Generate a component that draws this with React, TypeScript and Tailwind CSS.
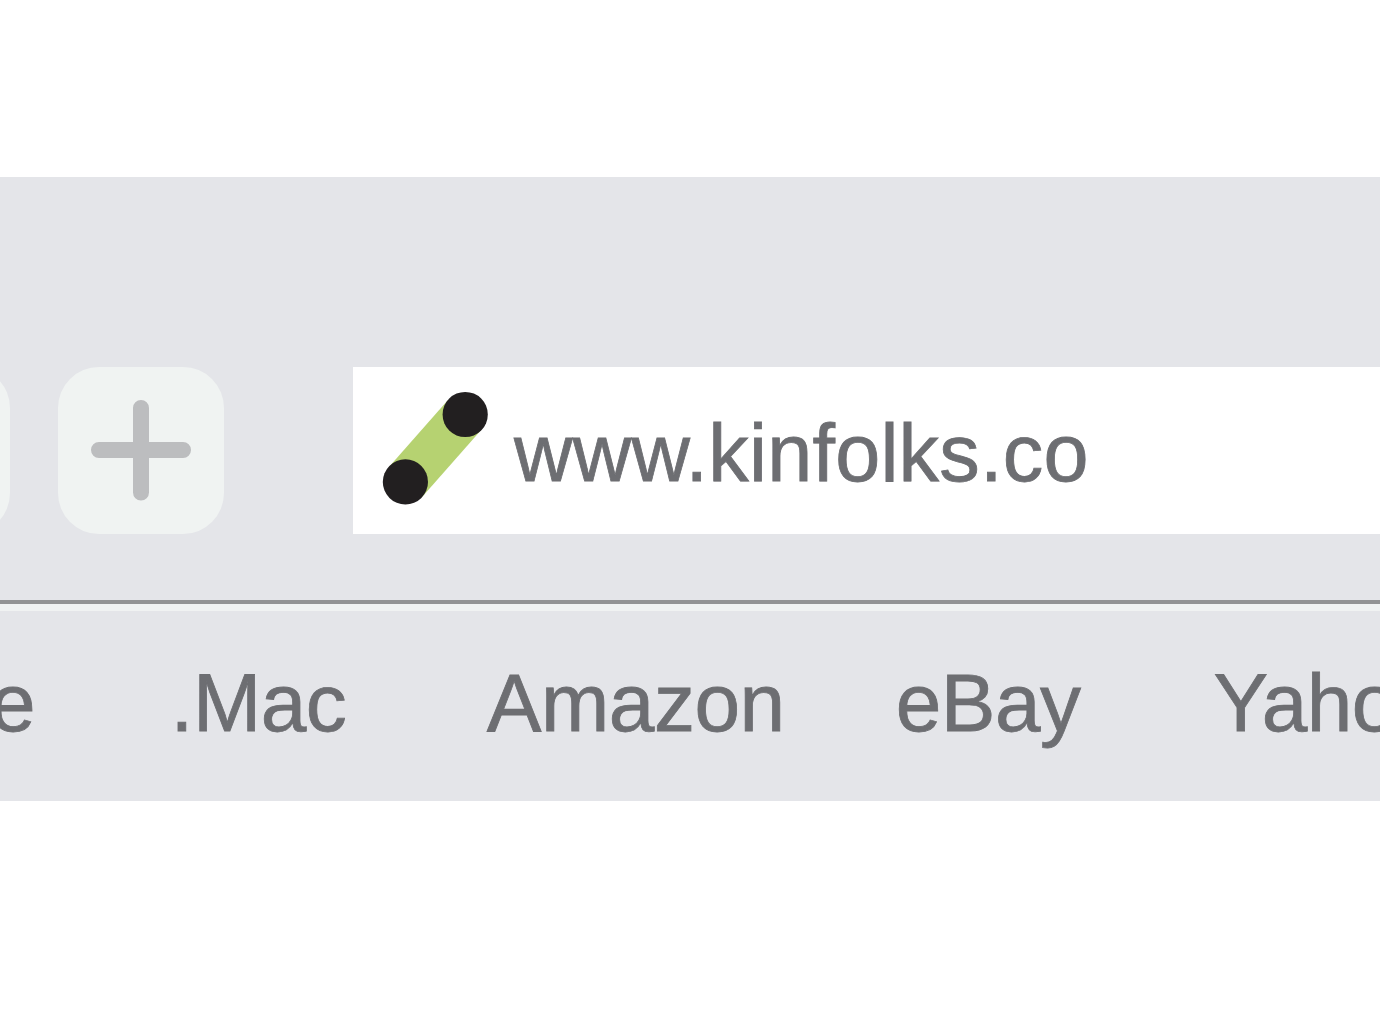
import React from 'react';

// Bookmarks run off both edges of the window, so the outer labels are cut.
const bookmarks = [
    { label: 'e', className: '-ml-[10px]' },
    { label: '.Mac', className: 'ml-[135.5px]' },
    { label: 'Amazon', className: 'ml-[140.5px]' },
    { label: 'eBay', className: 'ml-[111px]' },
    { label: 'Yaho', className: 'ml-[133px]' },
];

const Favicon: React.FC = () => (
    <svg className="w-[108px] h-[116px] shrink-0" viewBox="0 0 108 116" aria-hidden="true">
        <line x1="24.5" y1="92" x2="84" y2="24.5" stroke="#b6d271" strokeWidth="44.8" />
        <circle cx="84.2" cy="24.5" r="22.6" fill="#221f20" />
        <circle cx="24.4" cy="91.9" r="22.6" fill="#221f20" />
    </svg>
);

const PlusButton: React.FC = () => (
    <button className="ml-12 flex items-center justify-center w-[166px] h-[167px] shrink-0 rounded-[41px] bg-[#f0f3f2]" aria-label="Add">
        <svg className="w-[102px] h-[103px]" viewBox="0 0 102 103" fill="none" stroke="#bcbdbf" strokeWidth="16" strokeLinecap="round">
            <path d="M9 51H93M51 9V93.5" />
        </svg>
    </button>
);

const Toolbar: React.FC = () => (
    <div className="flex h-[423px] pt-[189.5px]">
        <div className="w-[10px] h-[167px] shrink-0 overflow-hidden flex justify-end">
            <div className="w-[166px] h-[167px] shrink-0 rounded-[41px] bg-[#f0f3f2]" />
        </div>
        <PlusButton />
        <div className="ml-[128.5px] flex flex-1 items-start h-[167px] bg-white pt-[23.5px] pl-[28.5px]">
            <Favicon />
            <span className="ml-[25px] mt-[21.5px] whitespace-nowrap text-[81px] leading-[82px] tracking-[0.2px]">www.kinfolks.co</span>
        </div>
    </div>
);

const BookmarksBar: React.FC = () => (
    <nav className="flex h-[201px] border-t-4 border-[#929394]">
        <div className="flex flex-1 border-t-[7px] border-[#f0f2f2] pt-[50.5px] tracking-[-0.5px]">
            {bookmarks.map(({ label, className }) => (
                <span key={label} className={`shrink-0 whitespace-nowrap ${className}`}>
                    {label}
                </span>
            ))}
        </div>
    </nav>
);

export default function App() {
    return (
        <div className="w-full h-[1010px] overflow-hidden bg-white pt-[177px] font-['Liberation_Sans',Arial,sans-serif] text-[82px] leading-[82px] text-[#6d6e72] [-webkit-text-stroke:0.8px_#6d6e72]">
            <div className="h-[624px] overflow-hidden bg-[#e4e5e9]">
                <Toolbar />
                <BookmarksBar />
            </div>
        </div>
    );
}
